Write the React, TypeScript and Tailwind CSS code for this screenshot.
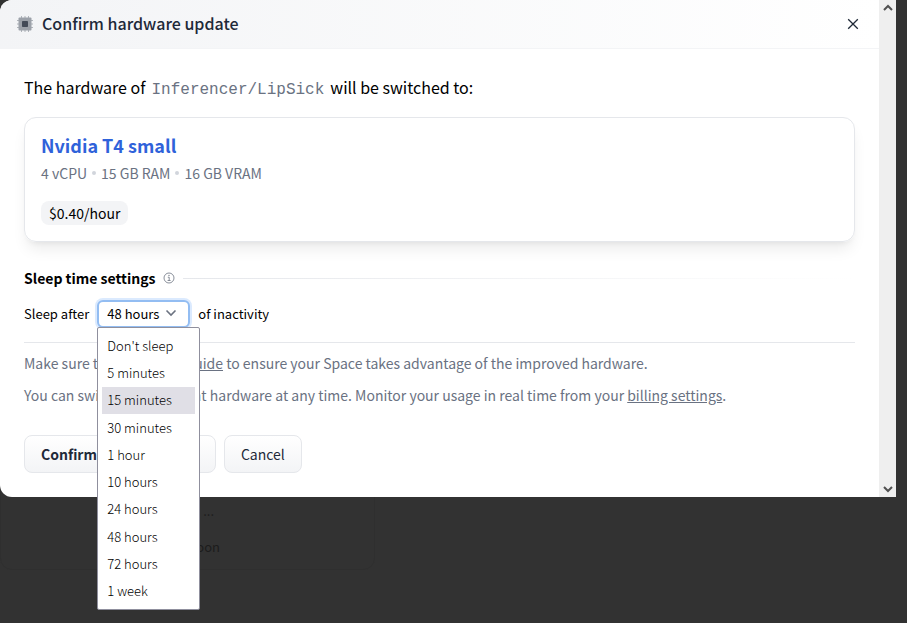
import React from "react";

const sleepOptions = [
  "Don't sleep",
  "5 minutes",
  "15 minutes",
  "30 minutes",
  "1 hour",
  "10 hours",
  "24 hours",
  "48 hours",
  "72 hours",
  "1 week",
];

function ChipIcon() {
  return (
    <svg className="size-4 shrink-0" viewBox="0 0 16 16" aria-hidden="true">
      <path
        d="M4.5 0v16M8 0v16M11.5 0v16M0 4.5h16M0 8h16M0 11.5h16"
        stroke="#b0b4ba"
        strokeWidth="1"
      />
      <rect x="1.5" y="1.5" width="13" height="13" rx="1" fill="#9ca1a9" />
      <rect x="5" y="5" width="6" height="6" rx="0.8" fill="#434a57" />
    </svg>
  );
}

function CloseIcon() {
  return (
    <svg className="size-3" viewBox="0 0 12 12" fill="none" aria-hidden="true">
      <path d="M1.2 1.2l9.6 9.6M10.8 1.2l-9.6 9.6" stroke="#1f2937" strokeWidth="1.3" />
    </svg>
  );
}

function InfoIcon() {
  return (
    <svg className="size-3" viewBox="0 0 12 12" fill="none" stroke="#6b7280" aria-hidden="true">
      <circle cx="6" cy="6" r="5" strokeWidth="0.8" />
      <path d="M4.8 5.2h1.4v3.2M4.6 8.5h3" strokeWidth="0.8" />
      <circle cx="6" cy="3.4" r="0.6" fill="#6b7280" stroke="none" />
    </svg>
  );
}

function ScrollArrow({ up = false }: { up?: boolean }) {
  return (
    <svg className="h-2 w-3" viewBox="0 0 12 8" fill="none" aria-hidden="true">
      <path d={up ? "M2 6l4-4 4 4" : "M2 2l4 4 4-4"} stroke="#505050" strokeWidth="2" />
    </svg>
  );
}

function ScrollBar() {
  return (
    <div className="flex w-[17px] shrink-0 flex-col items-center justify-between bg-[#efefef]">
      <button type="button" aria-label="Scroll up" className="flex h-4 w-full items-center justify-center">
        <ScrollArrow up />
      </button>
      <button type="button" aria-label="Scroll down" className="flex h-4 w-full items-center justify-center">
        <ScrollArrow />
      </button>
    </div>
  );
}

function HardwareCard() {
  return (
    <section className="mt-4 rounded-xl border border-gray-200 px-4 pt-[15px] pb-4 shadow-lg shadow-black/8">
      <h3 className="text-lg/6 font-bold text-[#2f62da]">Nvidia T4 small</h3>
      <p className="mt-1 flex items-center gap-[5px] text-sm/6 text-gray-500">
        <span>4 vCPU</span>
        <span className="size-1 rounded-full bg-gray-300" />
        <span>15 GB RAM</span>
        <span className="size-1 rounded-full bg-gray-300" />
        <span>16 GB VRAM</span>
      </p>
      <p className="mt-4 w-fit rounded-lg bg-gray-100 px-2 text-sm/6">$0.40/hour</p>
    </section>
  );
}

function SleepSelect() {
  return (
    <div className="relative">
      <select
        id="sleep-time"
        defaultValue="48 hours"
        className="block h-7 w-[93px] appearance-none rounded-md border-2 border-[#93bdf2] bg-white pl-2 text-[13px] ring-2 ring-blue-100 outline-none"
      >
        {sleepOptions.map((option) => (
          <option key={option}>{option}</option>
        ))}
      </select>
      <svg
        className="pointer-events-none absolute top-[9px] right-[13px] h-2 w-3"
        viewBox="0 0 12 8"
        fill="none"
        aria-hidden="true"
      >
        <path d="M1.5 1.5L6 6l4.5-4.5" stroke="#6b7280" strokeWidth="1.6" />
      </svg>
      <ul
        role="listbox"
        aria-label="Sleep time"
        className="absolute top-[27px] left-0 z-10 flex h-[283px] w-[103px] flex-col rounded-xs border border-[#8f8f9d] bg-white p-1 text-[13px]/[18px] font-light"
      >
        {sleepOptions.map((option) => (
          <li
            key={option}
            role="option"
            aria-selected={option === "48 hours"}
            className={
              option === "15 minutes"
                ? "flex flex-1 items-center bg-[#e0dfe6] pl-[5px]"
                : "flex flex-1 items-center pl-[5px]"
            }
          >
            {option}
          </li>
        ))}
      </ul>
    </div>
  );
}

function Backdrop() {
  return (
    <div className="absolute inset-0" aria-hidden="true">
      <div className="flex h-[570px] w-[375px] flex-col items-end justify-end rounded-xl border border-[#2f2f2f] text-[13px]/5 text-[#1c1c1c]">
        <span className="mr-[160px] mb-4">...</span>
        <span className="mr-[154px] mb-3">Coming soon</span>
      </div>
    </div>
  );
}

export default function App() {
  return (
    <div className="relative min-h-screen bg-[#323232] pr-[11px] font-['Noto_Sans_CJK_SC','Noto_Sans',sans-serif] text-black">
      <Backdrop />
      <div role="dialog" aria-labelledby="dialog-title" className="relative flex rounded-l-xl bg-white">
        <div className="min-w-0 flex-1">
          <header className="flex h-[49px] items-center gap-[9px] rounded-tl-xl border-b border-gray-100 bg-linear-to-r from-gray-100 to-white pr-5 pl-[17px]">
            <ChipIcon />
            <h2 id="dialog-title" className="flex-1 pb-0.5 text-base/6 font-medium text-gray-800">
              Confirm hardware update
            </h2>
            <button type="button" aria-label="Close">
              <CloseIcon />
            </button>
          </header>
          <div className="px-6 pt-6 pb-6">
            <p className="flex items-baseline gap-[6px] text-base/7">
              <span>The hardware of</span>
              <span className="font-['Liberation_Mono',monospace] leading-4 text-gray-500">Inferencer/LipSick</span>
              <span>will be switched to:</span>
            </p>
            <HardwareCard />
            <div className="mt-6 flex h-6 items-center">
              <h3 className="text-sm/6 font-bold">Sleep time settings</h3>
              <button type="button" aria-label="About sleep time" className="mx-2">
                <InfoIcon />
              </button>
              <div className="h-px flex-1 bg-linear-to-r from-gray-200 to-white" />
            </div>
            <div className="mt-[10px] flex h-7 items-center gap-2 text-[13px]/6">
              <label htmlFor="sleep-time">Sleep after</label>
              <SleepSelect />
              <span>of inactivity</span>
            </div>
            <hr className="mt-[14px] mb-2 border-gray-200" />
            <div className="flex flex-col gap-2 text-sm/6 text-gray-500">
              <p>
                Make sure to consult our{" "}
                <a href="#guide" className="underline">
                  guide
                </a>{" "}
                to ensure your Space takes advantage of the improved hardware.
              </p>
              <p>
                You can switch to a different hardware at any time. Monitor your usage in real time from your{" "}
                <a href="#billing" className="underline">
                  billing settings
                </a>
                .
              </p>
            </div>
            <div className="mt-7 flex gap-2 text-sm/6 text-gray-800">
              <button
                type="button"
                className="h-[38px] rounded-lg border border-gray-200 bg-linear-to-b from-white to-gray-100 px-4 font-bold"
              >
                Confirm new hardware
              </button>
              <button
                type="button"
                className="h-[38px] rounded-lg border border-gray-200 bg-linear-to-b from-white to-gray-100 px-4"
              >
                Cancel
              </button>
            </div>
          </div>
        </div>
        <ScrollBar />
      </div>
    </div>
  );
}
